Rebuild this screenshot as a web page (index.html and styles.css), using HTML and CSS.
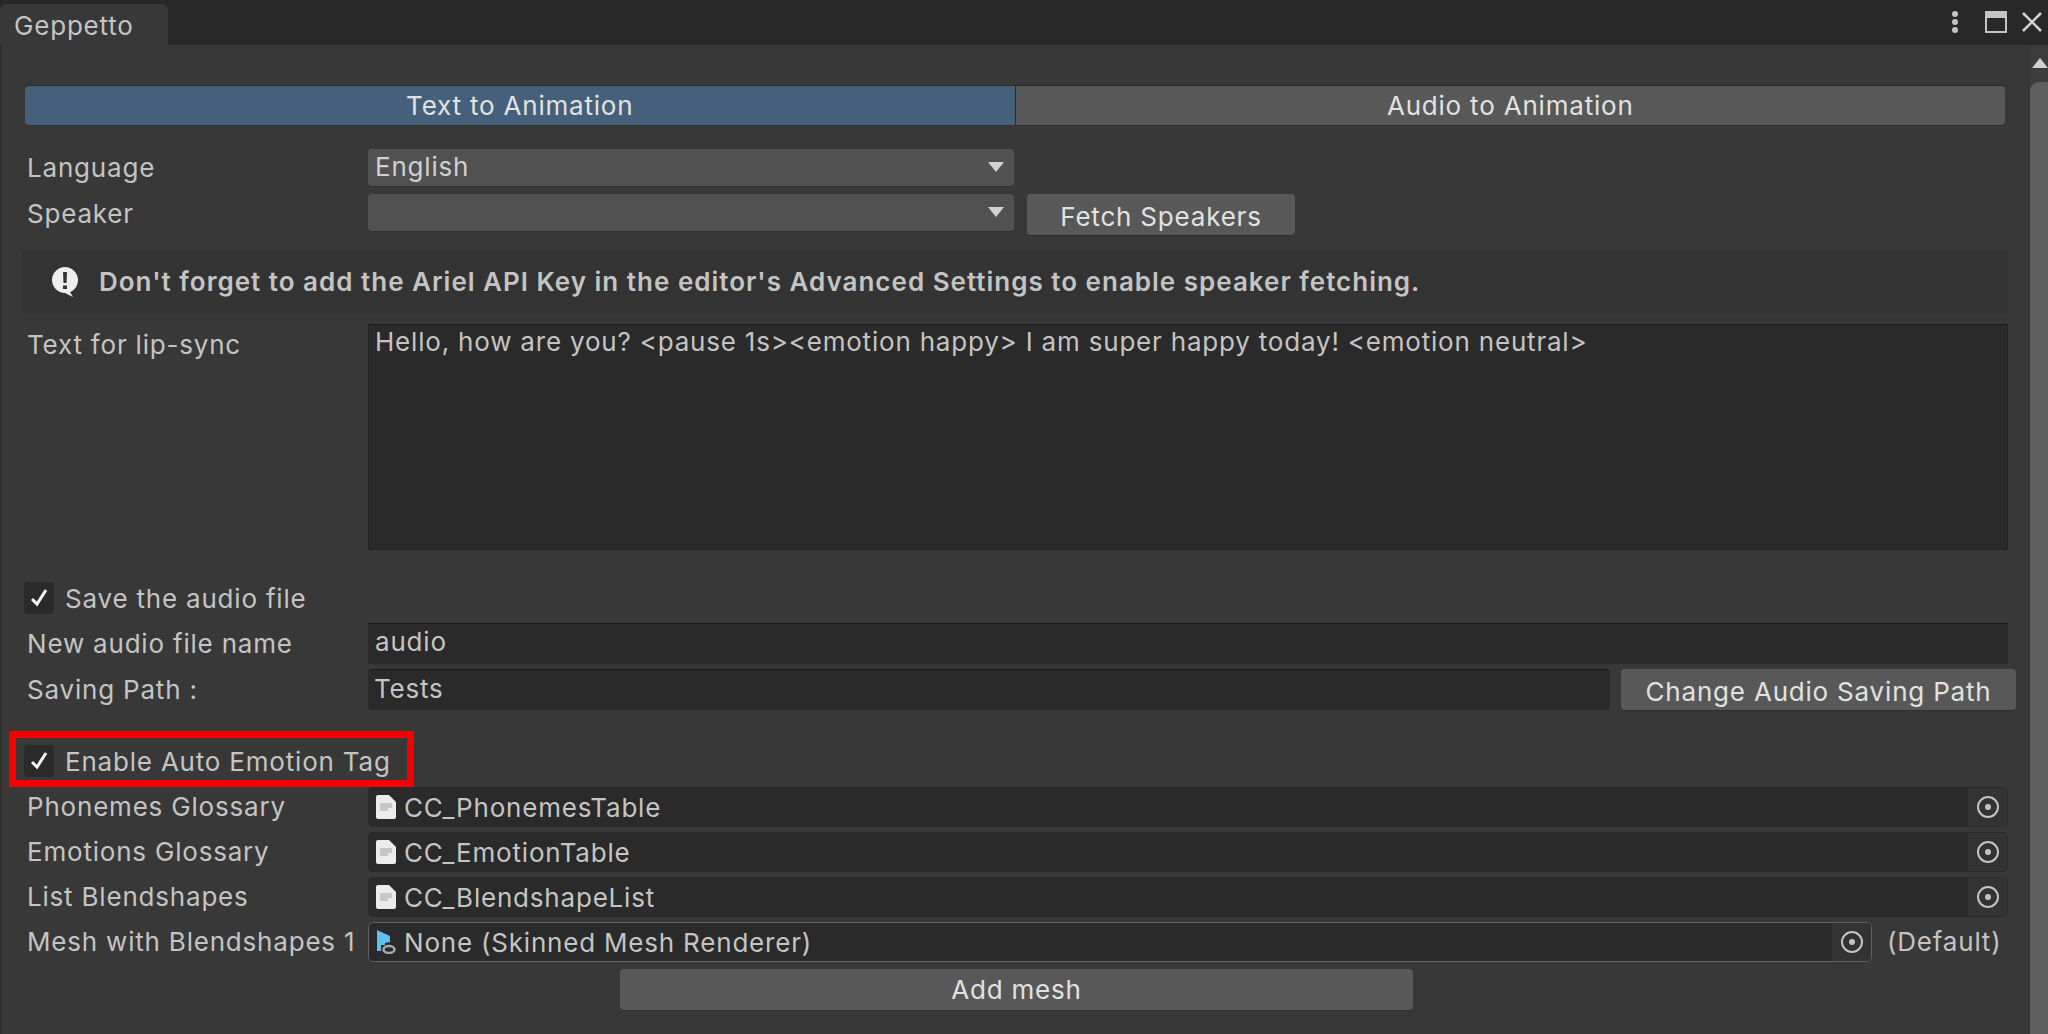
FILE: index.html
```html
<!DOCTYPE html>
<html lang="en">
<head>
    <meta charset="UTF-8">
    <title>Geppetto</title>
    <link rel="stylesheet" href="styles.css">
</head>
<body>

<svg class="defs" width="0" height="0">
    <symbol id="doc" viewBox="0 0 20 24">
        <path d="M2 0H13L20 7V22a2 2 0 0 1-2 2H2a2 2 0 0 1-2-2V2a2 2 0 0 1 2-2Z" fill="#ececec"/>
        <path d="M4 8H16V13H12V16H4Z" fill="#c6c6c6"/>
    </symbol>
    <symbol id="target" viewBox="0 0 24 24">
        <circle cx="12" cy="12" r="10" fill="none" stroke="#c4c4c4" stroke-width="2"/>
        <circle cx="12" cy="12" r="3" fill="#c4c4c4"/>
    </symbol>
    <symbol id="check" viewBox="0 0 20 20">
        <path d="M3 11L8 16L17 2" fill="none" stroke="#f4f4f4" stroke-width="3"/>
    </symbol>
    <symbol id="caret" viewBox="0 0 16 10">
        <path d="M0 0H16L8 10Z" fill="#d2d2d2"/>
    </symbol>
</svg>

<div class="tabbar">
    <div class="tab">Geppetto</div>
    <div class="window-icons">
        <svg class="icon-dots" viewBox="0 0 6 22"><circle cx="3" cy="3" r="3" fill="#c4c4c4"/><circle cx="3" cy="11" r="3" fill="#c4c4c4"/><circle cx="3" cy="19" r="3" fill="#c4c4c4"/></svg>
        <svg class="icon-max" viewBox="0 0 22 22"><path d="M0 0H22V22H0Z M2 7V20H20V7Z" fill="#c4c4c4" fill-rule="evenodd"/></svg>
        <svg class="icon-close" viewBox="0 0 20 20"><path d="M1 1L19 19M19 1L1 19" stroke="#d0d0d0" stroke-width="2.600"/></svg>
    </div>
</div>

<div class="main">
    <div class="content">
        <div class="toolbar">
            <div class="tool active">Text to Animation</div>
            <div class="tool">Audio to Animation</div>
        </div>

        <div class="row row-language">
            <div class="label">Language</div>
            <div class="dropdown">English<svg class="caret"><use href="#caret"/></svg></div>
        </div>
        <div class="row row-speaker">
            <div class="label">Speaker</div>
            <div class="dropdown"><svg class="caret"><use href="#caret"/></svg></div>
            <div class="button fetch">Fetch Speakers</div>
        </div>

        <div class="helpbox">
            <svg class="help-icon" viewBox="0 0 26 30">
                <path d="M13 0C20 0 26 6 26 13C26 19 22 24 18 25L21 30L13 26C6 26 0 20 0 13C0 6 6 0 13 0Z" fill="#eeeeee"/>
                <path d="M11 5H15L14.500 16H11.500ZM11 18.500H15V22H11Z" fill="#333333"/>
            </svg>
            Don't forget to add the Ariel API Key in the editor's Advanced Settings to enable speaker fetching.
        </div>

        <div class="row row-text">
            <div class="label">Text for lip-sync</div>
            <div class="textarea">Hello, how are you? &lt;pause 1s&gt;&lt;emotion happy&gt; I am super happy today! &lt;emotion neutral&gt;</div>
        </div>

        <div class="toggle save-toggle">
            <span class="checkbox"><svg class="check"><use href="#check"/></svg></span>
            Save the audio file
        </div>
        <div class="row row-audio">
            <div class="label">New audio file name</div>
            <div class="input square">audio</div>
        </div>
        <div class="row row-path">
            <div class="label">Saving Path :</div>
            <div class="input">Tests</div>
            <div class="button change-path">Change Audio Saving Path</div>
        </div>

        <div class="toggle emotion-toggle">
            <span class="checkbox"><svg class="check"><use href="#check"/></svg></span>
            Enable Auto Emotion Tag
        </div>
        <div class="row object-row first">
            <div class="label">Phonemes Glossary</div>
            <div class="objfield">
                <svg class="obj-icon"><use href="#doc"/></svg>
                <span class="obj-name">CC_PhonemesTable</span>
                <span class="picker"><svg class="target"><use href="#target"/></svg></span>
            </div>
        </div>
        <div class="row object-row">
            <div class="label">Emotions Glossary</div>
            <div class="objfield">
                <svg class="obj-icon"><use href="#doc"/></svg>
                <span class="obj-name">CC_EmotionTable</span>
                <span class="picker"><svg class="target"><use href="#target"/></svg></span>
            </div>
        </div>
        <div class="row object-row">
            <div class="label">List Blendshapes</div>
            <div class="objfield">
                <svg class="obj-icon"><use href="#doc"/></svg>
                <span class="obj-name">CC_BlendshapeList</span>
                <span class="picker"><svg class="target"><use href="#target"/></svg></span>
            </div>
        </div>
        <div class="row object-row">
            <div class="label">Mesh with Blendshapes 1</div>
            <div class="objfield outlined">
                <svg class="obj-icon" viewBox="0 0 20 24">
                    <path d="M1 0L14 6V12L9 13V15H5V21H1Z" fill="#62bdf0"/>
                    <ellipse cx="13" cy="19.500" rx="5.500" ry="3.500" fill="none" stroke="#a8a8a8" stroke-width="2.500"/>
                </svg>
                <span class="obj-name">None (Skinned Mesh Renderer)</span>
                <span class="picker"><svg class="target"><use href="#target"/></svg></span>
            </div>
            <div class="default-tag">(Default)</div>
        </div>

        <div class="button add-mesh">Add mesh</div>
    </div>

    <div class="scrollbar">
        <div class="arrow"></div>
        <div class="thumb"></div>
    </div>
</div>

</body>
</html>
```

FILE: styles.css
```css
* {
    box-sizing: border-box;
}

html, body {
    height: 100%;
}

body {
    margin: 0;
    display: flex;
    flex-direction: column;
    background-color: #383838;
    color: #c4c4c4;
    font-family: Inter, "Noto Sans", sans-serif;
    font-size: 26px;
    letter-spacing: 0.8px;
    overflow: hidden;
}

.defs {
    position: absolute;
}

/* Tab strip */
.tabbar {
    height: 45px;
    flex: none;
    display: flex;
    justify-content: space-between;
    background-color: #282828;
}

.tab {
    width: 168px;
    margin-top: 4px;
    padding: 6px 0 0 14px;
    background-color: #383838;
    border-radius: 6px 6px 0 0;
}

.window-icons {
    display: flex;
    align-items: center;
    padding: 0 0 1px 0;
}

.icon-dots {
    width: 6px;
    height: 22px;
    margin-right: 27px;
}

.icon-max {
    width: 22px;
    height: 22px;
    margin-right: 15px;
}

.icon-close {
    width: 20px;
    height: 20px;
    margin-right: 6px;
}

.main {
    flex: 1;
    display: flex;
    border-left: 2px solid #2e2e2e;
}

.content {
    flex: 1;
    min-width: 0;
    padding: 40px 20px 0 16px;
}

/* Toolbar */
.toolbar {
    display: flex;
    height: 41px;
    margin: 0 3px 0 7px;
    border-top: 1px solid #2a2a2a;
}

.tool {
    flex: 1;
    display: flex;
    align-items: center;
    justify-content: center;
    background-color: #585858;
    color: #e2e2e2;
    border-radius: 0 4px 4px 0;
    border-bottom: 1px solid #2f2f2f;
}

.tool.active {
    background-color: #46607c;
    border-radius: 4px 0 0 4px;
    border-right: 1px solid #2a2a2a;
}

/* Rows */
.row {
    display: flex;
    align-items: flex-start;
}

.label {
    width: 350px;
    flex: none;
    padding-left: 9px;
    line-height: 41px;
}

.row-language {
    margin-top: 23px;
}

.row-language .label {
    line-height: 38px;
}

.row-speaker {
    margin-top: 7px;
}

.row-speaker .label {
    line-height: 39px;
}

.first .label {
    line-height: 39px;
}

.object-row .label {
    line-height: 40px;
}

.dropdown {
    width: 646px;
    height: 38px;
    flex: none;
    display: flex;
    align-items: center;
    justify-content: space-between;
    padding: 0 10px 2px 7px;
    background-color: #515151;
    border-radius: 4px;
    border-bottom: 1px solid #2f2f2f;
    color: #d0d0d0;
}

.row-speaker .dropdown {
    justify-content: flex-end;
}

.caret {
    width: 16px;
    height: 10px;
}

.button {
    display: flex;
    align-items: center;
    justify-content: center;
    height: 42px;
    background-color: #585858;
    color: #e2e2e2;
    border-radius: 4px;
    border-bottom: 1px solid #2f2f2f;
}

.fetch {
    width: 268px;
    margin-left: 13px;
    padding-top: 4px;
}

/* Help message */
.helpbox {
    display: flex;
    align-items: center;
    height: 63px;
    margin-top: 14px;
    margin-left: 4px;
    padding-left: 77px;
    position: relative;
    background-color: #333333;
    font-weight: 600;
    letter-spacing: 1px;
    color: #c4c4c4;
}

.help-icon {
    position: absolute;
    left: 30px;
    top: 17px;
    width: 26px;
    height: 30px;
}

.row-text {
    margin-top: 11px;
}

.textarea, .input {
    flex: 1;
    padding-left: 6px;
    background-color: #2a2a2a;
    border-top: 1px solid #1a1a1a;
    color: #c4c4c4;
}

.textarea {
    height: 226px;
    line-height: 34px;
    border-left: 1px solid #232323;
    border-right: 1px solid #232323;
    border-bottom: 1px solid #232323;
}

.toggle {
    display: flex;
    align-items: center;
    height: 32px;
    padding-left: 6px;
}

.checkbox {
    width: 30px;
    height: 32px;
    margin-right: 11px;
    display: flex;
    align-items: center;
    justify-content: center;
    background-color: #2a2a2a;
    border-radius: 4px;
}

.check {
    width: 20px;
    height: 20px;
}

.save-toggle {
    margin-top: 32px;
}

.row-audio {
    margin-top: 9px;
}

.row-path {
    margin-top: 5px;
}

.input {
    height: 41px;
    line-height: 38px;
    border-radius: 4px;
}

.input.square {
    padding-left: 7px;
    line-height: 36px;
    border-radius: 0;
}

.change-path {
    width: 395px;
    margin-left: 11px;
    margin-right: -8px;
    padding-top: 4px;
}

/* Highlight box of the screenshot */
.emotion-toggle {
    position: relative;
    margin-top: 34px;
}

.emotion-toggle::after {
    content: "";
    position: absolute;
    left: -9px;
    top: -14px;
    width: 391px;
    height: 42px;
    border: 7px solid #f40000;
}

/* Object fields */
.object-row {
    margin-top: 5px;
}

.object-row.first {
    margin-top: 10px;
}

.objfield {
    flex: 1;
    height: 40px;
    display: flex;
    align-items: center;
    padding-left: 7px;
    background-color: #2a2a2a;
    border: 1px solid #2a2a2a;
    border-radius: 5px;
    overflow: hidden;
}

.objfield.outlined {
    border-color: #606060;
}

.obj-icon {
    width: 20px;
    height: 24px;
    flex: none;
    margin-right: 8px;
}

.obj-name {
    flex: 1;
}

.picker {
    width: 39px;
    height: 100%;
    display: flex;
    align-items: center;
    justify-content: center;
    background-color: #333333;
}

.target {
    width: 24px;
    height: 24px;
}

.default-tag {
    width: 136px;
    flex: none;
    padding-left: 15px;
    line-height: 40px;
}

.add-mesh {
    width: 793px;
    margin: 7px 0 0 602px;
}

/* Scrollbar */
.scrollbar {
    width: 20px;
    flex: none;
    display: flex;
    flex-direction: column;
    align-items: flex-end;
    border-left: 1px solid #323232;
    background-color: #3c3c3c;
}

.arrow {
    width: 0;
    height: 0;
    margin-top: 13px;
    border-left: 8px solid transparent;
    border-right: 8px solid transparent;
    border-bottom: 10px solid #d0d0d0;
}

.thumb {
    flex: 1;
    width: 18px;
    margin-top: 14px;
    background-color: #5f5f5f;
    border-radius: 9px 0 0 0;
}
```
